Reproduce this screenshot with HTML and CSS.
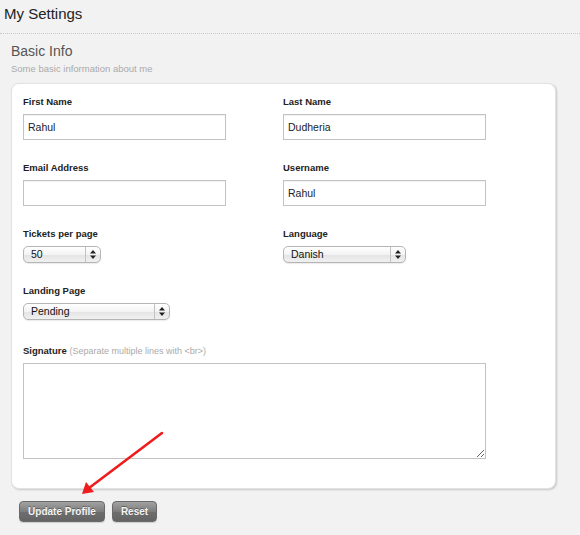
FILE: index.html
```html
<!DOCTYPE html>
<html>
<head>
<meta charset="utf-8">
<link rel="stylesheet" href="styles.css">
</head>
<body>
<div class="page">
  <header class="topbar"><h1 class="title">My Settings</h1></header>
  <section class="section">
    <h2 class="sec-title">Basic Info</h2>
    <p class="sec-sub">Some basic information about me</p>
    <form class="card">
      <div class="row">
        <div class="field col">
          <label class="lbl">First Name</label>
          <input class="txt" type="text" value="Rahul">
        </div>
        <div class="field col">
          <label class="lbl">Last Name</label>
          <input class="txt" type="text" value="Dudheria">
        </div>
      </div>
      <div class="row">
        <div class="field col">
          <label class="lbl">Email Address</label>
          <input class="txt" type="text" value="">
        </div>
        <div class="field col">
          <label class="lbl">Username</label>
          <input class="txt" type="text" value="Rahul">
        </div>
      </div>
      <div class="row">
        <div class="field col">
          <label class="lbl">Tickets per page</label>
          <div class="sel sel-tickets"><span class="sel-val">50</span><span class="sel-arr"><svg width="6" height="9" viewBox="0 0 6 9"><path d="M3 0 L6 3.5 L0 3.5 Z M0 5.5 L6 5.5 L3 9 Z" fill="#222"/></svg></span></div>
        </div>
        <div class="field col">
          <label class="lbl">Language</label>
          <div class="sel sel-lang"><span class="sel-val">Danish</span><span class="sel-arr"><svg width="6" height="9" viewBox="0 0 6 9"><path d="M3 0 L6 3.5 L0 3.5 Z M0 5.5 L6 5.5 L3 9 Z" fill="#222"/></svg></span></div>
        </div>
      </div>
      <div class="row">
        <div class="field col">
          <label class="lbl">Landing Page</label>
          <div class="sel sel-landing"><span class="sel-val">Pending</span><span class="sel-arr"><svg width="6" height="9" viewBox="0 0 6 9"><path d="M3 0 L6 3.5 L0 3.5 Z M0 5.5 L6 5.5 L3 9 Z" fill="#222"/></svg></span></div>
        </div>
      </div>
      <div class="row row-sig">
        <div class="field">
          <label class="lbl">Signature <span class="hint">(Separate multiple lines with &lt;br&gt;)</span></label>
          <textarea class="area"></textarea>
        </div>
      </div>
    </form>
    <div class="actions">
      <button class="btn btn-update" type="button">Update Profile</button>
      <button class="btn btn-reset" type="button">Reset</button>
    </div>
  </section>
  <svg class="arrow" width="580" height="535" viewBox="0 0 580 535">
    <line x1="162" y1="433" x2="89" y2="488" stroke="#ee1c1c" stroke-width="2.6" stroke-linecap="round"/>
    <path d="M82 494 L86 482 L94 492 Z" fill="#ee1c1c"/>
  </svg>
</div>
</body>
</html>
```
FILE: styles.css
```css
* { box-sizing: border-box; }
html, body { margin: 0; padding: 0; }
body {
  background: #f2f2f2;
  font-family: "Liberation Sans", Arial, sans-serif;
  color: #222;
  width: 580px;
  height: 535px;
  overflow: hidden;
}
.page { position: relative; width: 580px; height: 535px; }
.topbar {
  height: 34px;
  border-bottom: 1px dotted #c8c8c8;
  padding: 4px 0 0 4px;
}
.title {
  margin: 0;
  font-size: 15px;
  font-weight: normal;
  line-height: 20px;
  color: #222;
}
.section { padding: 0 0 0 11px; }
.sec-title {
  margin: 8px 0 0 0;
  font-size: 14px;
  font-weight: normal;
  line-height: 18px;
  color: #555;
}
.sec-sub {
  margin: 3px 0 0 0;
  font-size: 9.5px;
  line-height: 12px;
  color: #aaa;
}
.card {
  margin: 8px 0 0 0;
  width: 545px;
  height: 406px;
  background: #fff;
  border: 1px solid #e2e2e2;
  border-radius: 8px;
  box-shadow: 1px 1px 2px rgba(0,0,0,0.18);
  padding: 12px 0 0 11px;
  display: flex;
  flex-direction: column;
  gap: 22px;
}
.row { display: flex; gap: 57px; }
.row-sig { margin-top: 3px; }
.field { display: flex; flex-direction: column; }
.col { width: 203px; }
.lbl {
  display: block;
  font-size: 9.5px;
  font-weight: bold;
  line-height: 12px;
  height: 12px;
  margin-bottom: 6px;
  color: #222;
  white-space: nowrap;
}
.hint { font-weight: normal; color: #aaa; font-size: 9px; }
.txt {
  width: 203px;
  height: 26px;
  border: 1px solid #c3c3c3;
  box-shadow: inset 0 1px 1px rgba(0,0,0,0.06);
  font-family: "Liberation Sans", Arial, sans-serif;
  font-size: 10.5px;
  color: #222;
  padding: 0 4px;
  margin: 0;
  outline: none;
  background: #fff;
}
.sel {
  height: 17px;
  display: flex;
  align-items: stretch;
  border: 1px solid #b5b5b5;
  border-radius: 5px;
  background: linear-gradient(#ffffff, #f3f3f3 50%, #e4e4e4 51%, #f0f0f0);
  box-shadow: 0 1px 1px rgba(0,0,0,0.08);
  font-size: 10.5px;
  color: #111;
}
.sel-val { flex: 1; padding-left: 7px; line-height: 15px; }
.sel-arr {
  width: 15px;
  border-left: 1px solid #c2c2c2;
  display: flex;
  align-items: center;
  justify-content: center;
}
.sel-tickets { width: 78px; }
.sel-lang { width: 123px; }
.sel-landing { width: 147px; }
.area {
  width: 463px;
  height: 96px;
  border: 1px solid #c3c3c3;
  margin: 0;
  padding: 3px;
  font-family: "Liberation Sans", Arial, sans-serif;
  font-size: 11px;
  outline: none;
  background: #fff;
}
.actions { margin: 12px 0 0 8px; display: flex; gap: 7px; }
.btn {
  height: 21px;
  margin: 0;
  padding: 0 6px;
  border: 1px solid #6a6a6a;
  border-radius: 4px;
  background: linear-gradient(#a2a2a2, #7d7d7d 50%, #6e6e6e 51%, #646464);
  color: #f4f4f4;
  font-family: "Liberation Sans", Arial, sans-serif;
  font-size: 10px;
  font-weight: bold;
  text-shadow: 0 -1px 0 rgba(0,0,0,0.35);
  box-shadow: 0 1px 1px rgba(0,0,0,0.15);
}
.btn-update { width: 86px; }
.btn-reset { width: 45px; }
.arrow { position: absolute; left: 0; top: 0; pointer-events: none; }
```
